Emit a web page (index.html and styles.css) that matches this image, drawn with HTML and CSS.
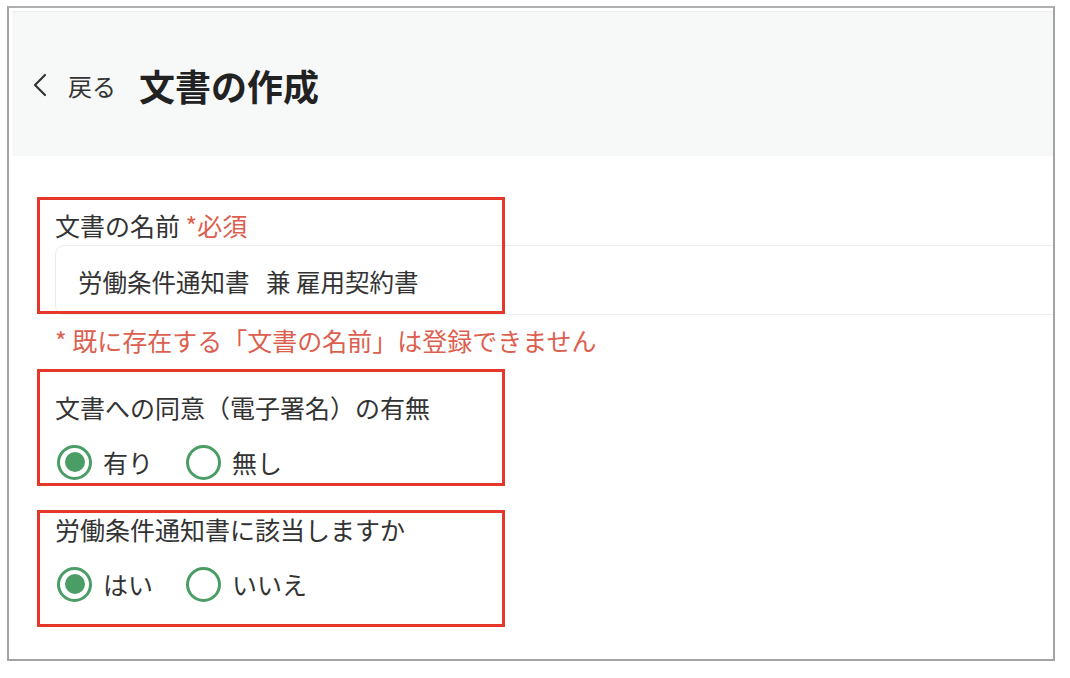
FILE: index.html
```html
<!DOCTYPE html>
<html lang="ja">
<head>
  <meta charset="UTF-8">
  <meta name="viewport" content="width=device-width, initial-scale=1.0">
  <title>文書の作成</title>
  <link rel="stylesheet" href="styles.css">
</head>
<body>

  <div class="frame">

    <header class="page-header">
      <a class="back-link" href="#">
        <svg class="back-icon" width="14" height="24" viewBox="0 0 14 24" aria-hidden="true">
          <polyline points="12,2 2,12 12,22" fill="none" stroke="#333" stroke-width="2.2" stroke-linecap="round" stroke-linejoin="round"/>
        </svg>
        <span>戻る</span>
      </a>
      <h1>文書の作成</h1>
    </header>

    <main class="form">

      <!-- document name -->
      <div class="field field-name">
        <div class="callout callout-name"></div>
        <label class="field-label" for="docName">文書の名前 <span class="required">*必須</span></label>
        <input class="text-input" type="text" id="docName" value="労働条件通知書&nbsp;&nbsp; 兼 雇用契約書">
        <p class="error-text">* 既に存在する「文書の名前」は登録できません</p>
      </div>

      <!-- consent -->
      <div class="field field-consent">
        <div class="callout callout-consent"></div>
        <p class="field-label">文書への同意（電子署名）の有無</p>
        <div class="radio-row">
          <label class="radio"><input type="radio" name="consent" checked><span>有り</span></label>
          <label class="radio"><input type="radio" name="consent"><span>無し</span></label>
        </div>
      </div>

      <!-- labor conditions -->
      <div class="field field-labor">
        <div class="callout callout-labor"></div>
        <p class="field-label">労働条件通知書に該当しますか</p>
        <div class="radio-row">
          <label class="radio"><input type="radio" name="labor" checked><span>はい</span></label>
          <label class="radio"><input type="radio" name="labor"><span>いいえ</span></label>
        </div>
      </div>

    </main>

  </div>

</body>
</html>
```

FILE: styles.css
```css
body {
  margin: 0;
  background: #ffffff;
  font-family: "Noto Sans CJK JP", "Noto Sans", sans-serif;
  color: #333333;
}

.frame {
  margin: 6px 0 0 7px;
  width: 1041px;
  height: 648px;
  border: 2px solid #a3a3a3;
  border-top-color: #b0b0b0;
  padding: 3px 0 0 3px;
  box-sizing: content-box;
  overflow: hidden;
  background: #ffffff;
}

.page-header {
  height: 145px;
  box-sizing: border-box;
  padding: 2px 0 0 21px;
  background: #f7f8f8;
  border-top: 1px solid #eeeeee;
  display: flex;
  align-items: center;
}

.back-link {
  display: flex;
  align-items: center;
  gap: 21px;
  color: #333333;
  text-decoration: none;
  font-size: 24px;
}

.back-icon {
  display: block;
}

.page-header h1 {
  margin: 0 0 0 23px;
  font-size: 36px;
  font-weight: 700;
  color: #222222;
}

.form {
  padding: 52px 0 0 43px;
}

.field {
  position: relative;
}

.field-label {
  display: block;
  margin: 0;
  font-size: 25px;
  line-height: 35px;
  color: #333333;
}

.required {
  color: #dc5f50;
}

.text-input {
  display: block;
  margin-top: 2px;
  width: 1100px;
  height: 70px;
  box-sizing: border-box;
  padding: 2px 22px 0;
  border: 1px solid #ececec;
  border-radius: 9px;
  font-family: inherit;
  font-size: 24.5px;
  color: #333333;
  background: #ffffff;
  outline: none;
}

.error-text {
  margin: 8px 0 0;
  font-size: 25px;
  line-height: 35px;
  color: #dc5f50;
}

.field-consent {
  margin-top: 32px;
}

.field-labor {
  margin-top: 32px;
}

.radio-row {
  display: flex;
  align-items: center;
  gap: 33px;
  margin: 19px 0 0 2px;
  height: 36px;
}

.radio {
  display: flex;
  align-items: center;
  gap: 11px;
  font-size: 25px;
  color: #333333;
}

.radio input {
  appearance: none;
  -webkit-appearance: none;
  margin: 0;
  width: 35px;
  height: 35px;
  border: 3px solid #4b9d66;
  border-radius: 50%;
  background: #ffffff;
  display: grid;
  place-items: center;
}

.radio input:checked::before {
  content: "";
  width: 20px;
  height: 20px;
  border-radius: 50%;
  background: #4b9d66;
}

/* red annotation boxes drawn over the form */
.callout {
  position: absolute;
  left: -18px;
  width: 468px;
  height: 117px;
  box-sizing: border-box;
  border: 3px solid #e6372b;
  pointer-events: none;
}

.callout-name {
  top: -11px;
}

.callout-consent {
  top: -21px;
}

.callout-labor {
  top: -2px;
}
```
